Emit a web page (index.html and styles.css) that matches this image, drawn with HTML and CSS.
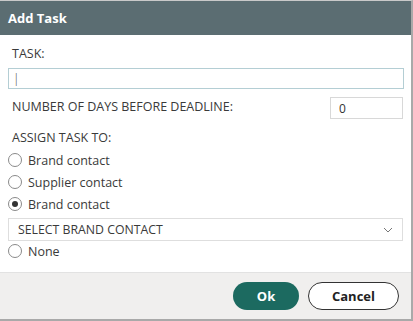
FILE: index.html
```html
<!DOCTYPE html>
<html lang="en">
<head>
<meta charset="UTF-8">
<meta name="viewport" content="width=device-width, initial-scale=1.0">
<title>Add Task</title>
<link rel="stylesheet" href="styles.css">
</head>
<body>

<div class="dialog">
  <div class="dialog-header">Add Task</div>

  <div class="dialog-body">
    <label class="field-label" for="task">TASK:</label>
    <input type="text" id="task" class="text-input task-input" value="|">

    <div class="days-row">
      <label class="field-label" for="days">NUMBER OF DAYS BEFORE DEADLINE:</label>
      <input type="text" id="days" class="text-input days-input" value="0">
    </div>

    <div class="field-label assign-label">ASSIGN TASK TO:</div>

    <label class="radio-row"><span class="radio"></span>Brand contact</label>
    <label class="radio-row"><span class="radio"></span>Supplier contact</label>
    <label class="radio-row"><span class="radio checked"></span>Brand contact</label>

    <div class="select-box">
      <span>SELECT BRAND CONTACT</span>
      <svg width="10" height="6" viewBox="0 0 10 6"><path d="M1 1 L5 5 L9 1" fill="none" stroke="#777" stroke-width="1"/></svg>
    </div>

    <label class="radio-row none-row"><span class="radio"></span>None</label>
  </div>

  <div class="dialog-footer">
    <button class="btn btn-ok">Ok</button>
    <button class="btn btn-cancel">Cancel</button>
  </div>
</div>

</body>
</html>
```

FILE: styles.css
```css
/* Page */
body {
  margin: 0;
  font-family: "Open Sans", "Liberation Sans", sans-serif;
  color: #3a3a3a;
  background: #ffffff;
}

/* Dialog frame */
.dialog {
  width: 411px;
  height: 318px;
  border-top: 1px solid #c9c9c9;
  border-right: 2px solid #a9a9a9;
  border-bottom: 2px solid #a9a9a9;
  display: flex;
  flex-direction: column;
}

.dialog-header {
  height: 34px;
  background-color: #5b6d72;
  color: #ffffff;
  font-weight: bold;
  font-size: 13px;
  padding-left: 8px;
  display: flex;
  align-items: center;
}

.dialog-body {
  flex: 1;
  padding: 11px 8px 0 8px;
  display: flex;
  flex-direction: column;
}

.field-label {
  font-size: 12.5px;
  color: #3a3a3a;
  padding-left: 4px;
  line-height: 16px;
}

.text-input {
  font-family: inherit;
  font-size: 12px;
  color: #333;
  border: 1px solid #d8d8d8;
  box-sizing: border-box;
  outline: none;
}

.task-input {
  margin-top: 6px;
  width: 396px;
  height: 21px;
  border-color: #b4ced4;
  padding: 0 4px;
  font-weight: 300;
}

.days-row {
  margin-top: 8px;
  display: flex;
  justify-content: space-between;
  align-items: center;
}

.days-row .field-label {
  margin-top: -2px;
}

.days-input {
  width: 73px;
  height: 22px;
  padding: 0 8px;
}

.assign-label {
  margin-top: 11px;
}

/* Radio buttons */
.radio-row {
  display: flex;
  align-items: center;
  font-size: 12.5px;
  height: 22px;
  color: #3a3a3a;
}

.assign-label + .radio-row {
  margin-top: 3px;
}

.radio {
  width: 12px;
  height: 12px;
  border: 1px solid #8a8a8a;
  border-radius: 50%;
  margin-right: 6px;
  display: flex;
  align-items: center;
  justify-content: center;
}

.radio.checked::after {
  content: "";
  width: 6px;
  height: 6px;
  border-radius: 50%;
  background: #333;
}

.select-box {
  margin-top: 3px;
  width: 395px;
  height: 23px;
  box-sizing: border-box;
  border: 1px solid #dedede;
  padding: 0 9px 0 9px;
  display: flex;
  align-items: center;
  justify-content: space-between;
  font-size: 12.3px;
}

.none-row {
  height: 20px;
}

/* Footer buttons */
.dialog-footer {
  height: 46px;
  background-color: #f0efee;
  border-top: 1px solid #e2e2e2;
  display: flex;
  justify-content: flex-end;
  align-items: center;
  gap: 9px;
  padding-right: 12px;
}

.btn {
  height: 28px;
  border-radius: 14px;
  font-family: inherit;
  font-weight: bold;
  font-size: 13px;
  cursor: pointer;
}

.btn-ok {
  width: 66px;
  background-color: #1c6a60;
  color: #ffffff;
  border: none;
}

.btn-cancel {
  width: 91px;
  background-color: #ffffff;
  color: #222;
  border: 1px solid #333;
}
```
